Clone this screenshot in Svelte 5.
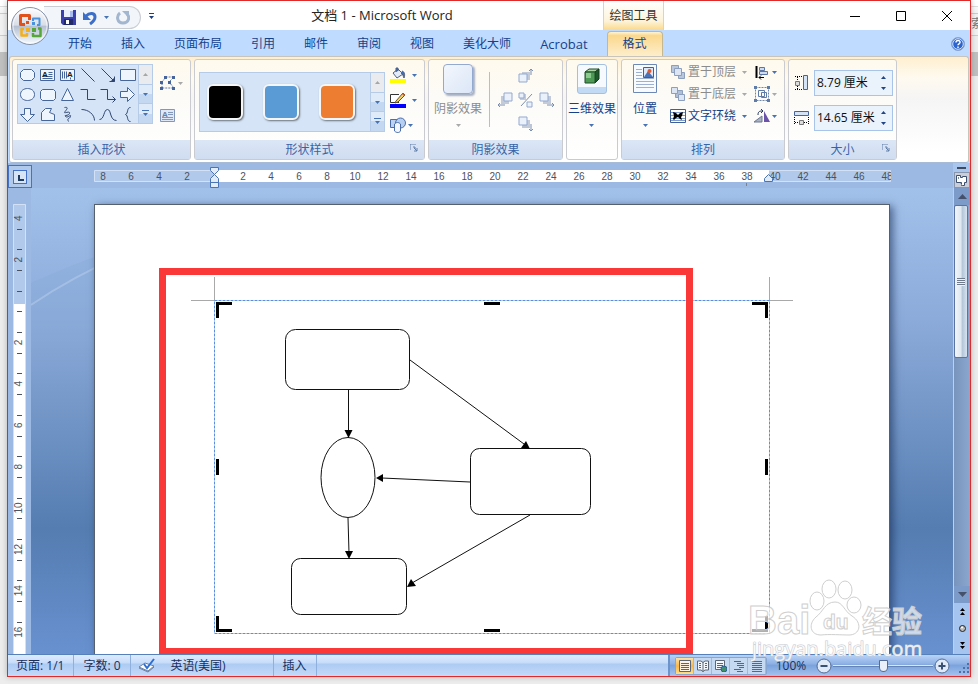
<script>
  const tabs = ['开始', '插入', '页面布局', '引用', '邮件', '审阅', '视图', '美化大师'];

  /** Shape gallery, three rows of six, drawn on a 20x20 grid */
  const shapes = [
    { name: '圆角矩形', d: 'M6 5h8l3 3v5l-3 3H6l-3-3V8z', filled: true },
    { name: '文本框', d: 'M3 5h14v11H3z M11 8h4 M11 10h4 M5 12h10 M5 14h10', letter: 5 },
    { name: '竖排文本框', d: 'M3 5h14v11H3z M5 7v7 M7 7v7 M9 7v7 M13 13v2', letter: 10 },
    { name: '直线', d: 'M4 4l13 13' },
    { name: '箭头', d: 'M4 4l13 13 M17 12v5h-5 M16 14v2h-2' },
    { name: '矩形', d: 'M3 5h15v11H3z', filled: true },
    { name: '椭圆', d: 'M3 10c0-8 14-8 14 0s-14 8-14 0z', filled: true },
    { name: '圆角', d: 'M5 5h11l2 2v7l-2 2H5l-2-2V7z', filled: true },
    { name: '三角形', d: 'M10 4l6 12H4z', filled: true },
    { name: '肘形连接符', d: 'M3 5h7v10h8' },
    { name: '肘形箭头', d: 'M3 5h7v10h8 M15 12l3 3l-3 3' },
    { name: '右箭头', d: 'M3 7h7V3l7 7l-7 7v-4H3z', filled: true },
    { name: '下箭头', d: 'M7 4h6v6h4l-7 7l-7-7h4z', filled: true },
    { name: '任意多边形', d: 'M4 8l4-4h6l-2 4l5 2v6H4z', filled: true },
    { name: '自由曲线', d: 'M7 3c6-1 0 4 0 5s6-2 5 1s-6 1-4 3s6-3 5 0s-4 1-2 5' },
    { name: '弧形', d: 'M4 5c7 0 13 5 13 11' },
    { name: '曲线', d: 'M2 15c5 0 4-10 8-10s2 11 9 11' },
    { name: '左大括号', d: 'M13 3c-4 0-2 6-5 7c3 1 1 7 5 7' }
  ];

  const styles = ['black', 'blue', 'orange'];
  const hNumbers = [8, 6, 4, 2];
  const hWhite = Array.from({ length: 24 }, (_, i) => (i + 1) * 2);
  const vNumbers = Array.from({ length: 8 }, (_, i) => (i + 1) * 2);

  let height = $state('8.79 厘米');
  let width = $state('14.65 厘米');
  let zoom = $state(50);
  let view = $state(0);
  const views = ['页面视图', '阅读版式', 'Web 版式', '大纲视图', '普通视图'];
</script>

{#snippet caret(tone)}
  <svg class="caret {tone}" width="5" height="3" viewBox="0 0 5 3"><path d="M0 0h5L2.500 3z" /></svg>
{/snippet}

{#snippet galleryScroll()}
  <div class="gallery-scroll">
    <button class="scroll-step off" aria-label="上一行"><svg width="5" height="3" viewBox="0 0 5 3"><path d="M0 3h5L2.500 0z" /></svg></button>
    <button class="scroll-step" aria-label="下一行">{@render caret('dark')}</button>
    <button class="scroll-step" aria-label="其他"><svg width="7" height="7" viewBox="0 0 7 7"><path d="M0 0h7v1H0zM1 3h5L3.500 6z" /></svg></button>
  </div>
{/snippet}

{#snippet launcher()}
  <button class="launcher" aria-label="对话框启动器">
    <svg width="8" height="8" viewBox="0 0 8 8"><path d="M0 6V0h6M3 3h2v2M7 4v3H4M4 4l3 3" /></svg>
  </button>
{/snippet}

{#snippet shadowIcon(dir)}
  <svg width="16" height="16" viewBox="0 0 16 16" class="nudge">
    {#if dir === 'toggle'}
      <path class="back" d="M2 2h6v6H2z" /><path class="front" d="M1 1h5v5H1zM9 10h5v5H9z" /><path class="arrow" d="M14 2L3 14" />
    {:else if dir === 'up'}
      <path class="back" d="M4 4h8v8H4z" /><path class="front" d="M1 6h8v8H1z" /><path class="arrow" d="M13 7V1M11 3l2-2l2 2" />
    {:else if dir === 'down'}
      <path class="back" d="M4 4h8v8H4z" /><path class="front" d="M1 1h8v8H1z" /><path class="arrow" d="M13 8v7M11 13l2 2l2-2" />
    {:else if dir === 'left'}
      <path class="back" d="M4 4h8v8H4z" /><path class="front" d="M7 1h8v8H7z" /><path class="arrow" d="M8 13H1M3 11l-2 2l2 2" />
    {:else}
      <path class="back" d="M4 4h8v8H4z" /><path class="front" d="M1 1h8v8H1z" /><path class="arrow" d="M8 13h7M13 11l2 2l-2 2" />
    {/if}
  </svg>
{/snippet}

<div class="desktop">
  <span class="behind">索</span>
  <div class="window">
    <!-- Title bar -->
    <header class="titlebar">
      <div class="quick-access">
        <button aria-label="保存">
          <svg width="15" height="15" viewBox="0 0 15 15"><path fill="#3a3fae" d="M0 0h15v15H2l-2-2z" /><path fill="#e8eefc" d="M3 0h9v7H3z" /><path fill="#a9bdf0" d="M9 1h3v6H9z" /><path fill="#222a6a" d="M3 9h9v6H3z" /><path fill="#fff" d="M5 10h3v4H5z" /></svg>
        </button>
        <button aria-label="撤消">
          <svg width="14" height="14" viewBox="0 0 14 14"><path d="M3 5c4-4 9-3 9 1c0 3-2 5-5 7" fill="none" stroke="#3d6fc8" stroke-width="3" /><path d="M0 1v8h8z" fill="#3d6fc8" /></svg>
        </button>
        <button class="narrow" aria-label="撤消列表">{@render caret('dark')}</button>
        <button aria-label="重复">
          <svg width="14" height="14" viewBox="0 0 14 14"><path d="M4 2c-4 3-3 10 3 10s7-6 4-9" fill="none" stroke="#a3b6cf" stroke-width="3" /><path d="M6 0h7v7z" fill="#a3b6cf" /></svg>
        </button>
      </div>
      <button class="customize" aria-label="自定义快速访问工具栏"><svg width="5" height="6" viewBox="0 0 5 6"><path d="M0 0h5v1H0zM0 3h5L2.500 6z" fill="#1f3f7f" /></svg></button>
      <h1>文档 1 - Microsoft Word</h1>
      <div class="context-title">绘图工具</div>
      <div class="controls">
        <button aria-label="最小化"><svg width="10" height="10" viewBox="0 0 10 10"><path d="M0 5.500h10" /></svg></button>
        <button aria-label="最大化"><svg width="10" height="10" viewBox="0 0 10 10"><path d="M.5.5h9v9h-9z" /></svg></button>
        <button aria-label="关闭"><svg width="10" height="10" viewBox="0 0 10 10"><path d="M0 0l10 10M10 0L0 10" /></svg></button>
      </div>
    </header>

    <!-- Tab strip -->
    <nav class="tabs">
      {#each tabs as tab}
        <button class="tab">{tab}</button>
      {/each}
      <button class="tab latin">Acrobat</button>
      <button class="tab active">格式</button>
      <button class="help" aria-label="帮助">
        <svg width="14" height="14" viewBox="0 0 14 14"><circle cx="7" cy="7" r="6.500" fill="#2b63cf" stroke="#8fa6cc" /><circle cx="7" cy="7" r="5.300" fill="none" stroke="#dbe8ff" /><path d="M5 5.500C5 2.600 9.400 3 9 5.500C8.800 7 7 6.800 7 8.300M7 9.500v1.500" fill="none" stroke="#fff" stroke-width="1.500" /></svg>
      </button>
    </nav>

    <button class="office" aria-label="Office 按钮">
      <svg width="40" height="40" viewBox="0 0 40 40">
        <defs>
          <linearGradient id="orb" x1="0" y1="0" x2="0" y2="1">
            <stop offset="0" stop-color="#fdfdfe" /><stop offset=".48" stop-color="#d9dde6" /><stop offset=".5" stop-color="#b4bfd2" /><stop offset="1" stop-color="#f6fbff" />
          </linearGradient>
        </defs>
        <circle cx="20" cy="20" r="18.500" fill="url(#orb)" stroke="#8592a8" />
        <circle cx="20" cy="20" r="17" fill="none" stroke="#fff" stroke-opacity=".7" />
        <g fill="none" stroke-linejoin="round">
          <path d="M15 18.500h-4.500v-9h9V14" stroke="#e2511b" stroke-width="3" />
          <path d="M23 15v-2.500h6.500V19H27" stroke="#4a93dc" stroke-width="2" />
          <path d="M17 27v2.500h-5.500V23H14" stroke="#f3b01c" stroke-width="2.500" />
          <path d="M28 22.500h2.500v7.500H23v-3" stroke="#56a63a" stroke-width="2.500" />
        </g>
        <path fill="#e2511b" d="M16 15h3v3h-3z" /><path fill="#4a93dc" d="M22 16h3v3h-3z" /><path fill="#f3b01c" d="M16 22h4v4h-4z" /><path fill="#56a63a" d="M22 22h4v4h-4z" />
      </svg>
    </button>

    <!-- Ribbon -->
    <section class="ribbon">
      <div class="group insert">
        <div class="body">
          <div class="gallery">
            <div class="shape-grid">
              {#each shapes as shape}
                <button class="shape" aria-label={shape.name}>
                  <svg width="20" height="20" viewBox="0 0 20 20">
                    <path d={shape.d} class:filled={shape.filled || shape.letter} transform="translate(-.5 -.5)" />
                    {#if shape.letter}<text x={shape.letter - 1} y="12">A</text>{/if}
                  </svg>
                </button>
              {/each}
            </div>
            {@render galleryScroll()}
          </div>
          <div class="insert-side">
            <button class="with-caret tight" aria-label="编辑形状">
              <svg width="16" height="14" viewBox="0 0 16 14"><path d="M2 12V6l4-5h8L9 6l5 6z" fill="none" stroke="#5b7bb0" stroke-dasharray="2 1" /><path fill="#46639c" d="M0 5h3v3H0zM4 0h3v3H4zM12 0h3v3h-3zM8 5h3v3H8zM0 11h3v3H0zM12 11h3v3h-3z" /></svg>
              {@render caret('muted')}
            </button>
            <button aria-label="文本框">
              <svg class="textbox-icon" width="15" height="13" viewBox="0 0 15 13"><path d="M.5.5h14v12H.5zM8 3.500h5M8 5.500h5M2 8.500h11M2 10.500h11" fill="#dfe8f6" stroke="#8397b8" /><text x="2" y="8">A</text></svg>
            </button>
          </div>
        </div>
        <h2>插入形状</h2>
      </div>

      <div class="group style">
        <div class="body">
          <div class="gallery">
            <div class="swatches">
              {#each styles as color}
                <button class="swatch-cell" aria-label="样式"><span class="swatch {color}"></span></button>
              {/each}
            </div>
            {@render galleryScroll()}
          </div>
          <div class="paint">
            <button class="with-caret" aria-label="形状填充">
              <svg width="16" height="16" viewBox="0 0 16 16"><path d="M3 6l5-4l5 5l-6 4z" fill="#e3ebf8" stroke="#4d5f83" /><path d="M6 5V1h2v3M12 4c3 1 3 4 2 7c-1-2-1-4-3-5" fill="#3d6fb8" stroke="#4d5f83" /><path fill="#ff0" d="M0 12h16v4H0z" /></svg>
              {@render caret('dark')}
            </button>
            <button class="with-caret" aria-label="形状轮廓">
              <svg width="16" height="16" viewBox="0 0 16 16"><path d="M9 2.500H.5v8H9" fill="#fff" stroke="#333" /><path d="M6 9l7-8l2 2l-7 7l-3 1z" fill="#f3d16a" stroke="#6b5320" /><path d="M12 2l1-1l2 2l-1 1z" fill="#d2573a" /><path fill="#00f" d="M0 12h16v4H0z" /></svg>
              {@render caret('dark')}
            </button>
            <button class="with-caret tight" aria-label="更改形状">
              <svg width="16" height="16" viewBox="0 0 16 16"><path d="M.5 2.500h9v8h-9z" fill="#bcd2f2" stroke="#4c6ea8" /><circle cx="10.500" cy="6" r="5" fill="#b7cff0" stroke="#4c6ea8" /><path d="M4.500 7v7c2 2 5 2 6 0V7c-2-2-4-2-6 0z" fill="#f2f7ff" stroke="#4c6ea8" /></svg>
              {@render caret('dark')}
            </button>
          </div>
        </div>
        <h2>形状样式{@render launcher()}</h2>
      </div>

      <div class="group shadow">
        <div class="body">
          <button class="big disabled">
            <span class="shadow-tile"></span>
            <span>阴影效果</span>
            {@render caret('muted')}
          </button>
          <div class="divider"></div>
          <div class="nudges">
            <button class="n-up" aria-label="上移">{@render shadowIcon('up')}</button>
            <button class="n-left" aria-label="左移">{@render shadowIcon('left')}</button>
            <button class="n-mid" aria-label="设置阴影">{@render shadowIcon('toggle')}</button>
            <button class="n-right" aria-label="右移">{@render shadowIcon('right')}</button>
            <button class="n-down" aria-label="下移">{@render shadowIcon('down')}</button>
          </div>
        </div>
        <h2>阴影效果</h2>
      </div>

      <div class="group three-d">
        <div class="body">
          <button class="big">
            <span class="cube-tile">
              <svg width="16" height="16" viewBox="0 0 16 16"><path d="M1 4l4-3h10l-4 3z" fill="#a8d3a2" stroke="#234d2a" /><path d="M11 4l4-3v10l-4 4z" fill="#1c5a2a" stroke="#173b1c" /><path d="M1 4h10v11H1z" fill="#4d9a55" stroke="#234d2a" /><path d="M2 5h5v5H2z" fill="#8cc98e" /></svg>
            </span>
            <span>三维效果</span>
            {@render caret('dark')}
          </button>
        </div>
      </div>

      <div class="group arrange">
        <div class="body">
          <button class="big">
            <svg width="24" height="30" viewBox="0 0 24 30"><path d="M.5.500h23v28H.5z" fill="#f7faff" stroke="#6d88b5" /><path d="M3 5.500h6M3 8.500h6M3 11.500h6M3 14.500h18M3 17.500h18M3 20.500h18M3 23.500h18" stroke="#9db0d2" /><path d="M10.500 3.500h10v10h-10z" fill="#dce9fb" stroke="#3f5f98" /><path d="M11 13l4-6l5 6z" fill="#4a74b8" /><circle cx="16.500" cy="7" r="2" fill="#dd5a33" /></svg>
            <span>位置</span>
            {@render caret('dark')}
          </button>
          <div class="arrange-list">
            <button class="row disabled">
              <svg width="16" height="16" viewBox="0 0 16 16"><g fill="#b9c7dc" stroke="#8c9fbc"><path d="M1.500 1.500h7v7h-7zM8.500 8.500h6v6h-6z" /><path d="M4.500 4.500h7v7h-7z" fill="#dbe5f3" /></g></svg>
              <span>置于顶层</span>{@render caret('muted')}
            </button>
            <button class="row disabled">
              <svg width="16" height="16" viewBox="0 0 16 16"><g fill="#dbe5f3" stroke="#8c9fbc"><path d="M5.500 4.500h7v7h-7z" fill="#b0bfd6" /><path d="M1.500 1.500h6v6h-6zM8.500 8.500h6v6h-6z" /></g></svg>
              <span>置于底层</span>{@render caret('muted')}
            </button>
            <button class="row">
              <svg width="16" height="16" viewBox="0 0 16 16"><path d="M.5 1.500h15v13H.5z" fill="#fff" stroke="#3e5f98" /><path d="M1 4.500h14M1 7.500h14M1 10.500h14M1 12.500h14" stroke="#7f9cca" /><path d="M3 4l3 1l2 2l2-2l3-1l-1 4l-1 1l1 3l-2-1l-2-2l-2 1l-2 2l-1-1l1-3z" fill="#000" /></svg>
              <span>文字环绕</span>{@render caret('dark')}
            </button>
          </div>
          <div class="align-list">
            <button class="with-caret tight" aria-label="对齐">
              <svg width="16" height="16" viewBox="0 0 16 16"><path d="M2.500 2v12" stroke="#000" stroke-width="2" /><path d="M5.500 3.500h5v3h-5zM5.500 7.500h8v3h-8z" fill="#cfdcf0" stroke="#5a76a6" /><path d="M5 13.500h5M7 11.500l-2 2l2 2" fill="none" stroke="#000" /></svg>
              {@render caret('dark')}
            </button>
            <button class="with-caret tight" aria-label="组合">
              <svg width="16" height="16" viewBox="0 0 16 16"><path d="M1.500 1.500h13v13h-13z" fill="none" stroke="#6d86b0" stroke-dasharray="2 1" /><path d="M4.500 4.500h6v6h-6zM7.500 6.500h5v5h-5z" fill="none" stroke="#5f7ba8" /><path d="M0 0h3v3H0zM13 0h3v3h-3zM0 13h3v3H0zM13 13h3v3h-3z" fill="#5f7ba8" /></svg>
              {@render caret('muted')}
            </button>
            <button class="with-caret tight" aria-label="旋转">
              <svg width="16" height="16" viewBox="0 0 16 16"><path d="M0 14h8V8z" fill="#a9b3c4" stroke="#6a7892" /><path d="M10 3v11h6z" fill="#6a53a8" /><path d="M4 7c0-4 2-4 5-4M7 1l2 2l-2 2" fill="none" stroke="#26395e" /></svg>
              {@render caret('dark')}
            </button>
          </div>
        </div>
        <h2>排列</h2>
      </div>

      <div class="group size">
        <div class="body">
          <div class="field">
            <label for="shape-height" aria-label="高度">
              <svg width="16" height="16" viewBox="0 0 16 16"><path d="M9.500.500h4v14h-4z" fill="#d5e3f7" stroke="#46639c" /><path d="M1 1.500h7M1 14.500h7M3.500 2v3M3.500 11v3" stroke="#000" stroke-dasharray="1 1" /><path d="M1.500 6.500h4v4h-4z" fill="#ddd" stroke="#777" /></svg>
            </label>
            <div class="spin">
              <input id="shape-height" type="text" bind:value={height} />
              <div class="steps">
                <button aria-label="增加高度"><svg width="5" height="3" viewBox="0 0 5 3"><path d="M0 3h5L2.500 0z" /></svg></button>
                <button aria-label="减少高度"><svg width="5" height="3" viewBox="0 0 5 3"><path d="M0 0h5L2.500 3z" /></svg></button>
              </div>
            </div>
          </div>
          <div class="field">
            <label for="shape-width" aria-label="宽度">
              <svg width="16" height="16" viewBox="0 0 16 16"><path d="M.5 1.500h14v4H.5z" fill="#d5e3f7" stroke="#46639c" /><path d="M.5 7v7M14.500 7v7M1 12.500h4M10 12.500h4" stroke="#000" stroke-dasharray="1 1" /><path d="M5.500 10.500h4v4h-4z" fill="#ddd" stroke="#777" /></svg>
            </label>
            <div class="spin">
              <input id="shape-width" type="text" bind:value={width} />
              <div class="steps">
                <button aria-label="增加宽度"><svg width="5" height="3" viewBox="0 0 5 3"><path d="M0 3h5L2.500 0z" /></svg></button>
                <button aria-label="减少宽度"><svg width="5" height="3" viewBox="0 0 5 3"><path d="M0 0h5L2.500 3z" /></svg></button>
              </div>
            </div>
          </div>
        </div>
        <h2>大小{@render launcher()}</h2>
      </div>
    </section>

    <!-- Rulers, page and scroll bar -->
    <main class="workspace">
      <button class="tab-stop" aria-label="制表符"><span></span></button>

      <div class="h-ruler">
        <svg width="798" height="25" viewBox="93 163 798 25">
          <path d="M94.500 170.500h796v11h-796z" fill="#b1c9eb" stroke="#d3e1f6" />
          <path d="M215 170h554v12H215z" fill="#fff" />
          {#each hNumbers as n}
            <text x={215 - n * 14} y="180">{n}</text>
          {/each}
          {#each hWhite as n}
            <text x={215 + n * 14} y="180">{n}</text>
          {/each}
          <path d="M746.500 183v3" stroke="#7a818f" />
          <path d="M210.500 167.500h8v3l-4 4l-4-4zM210.500 182.500v-4l4-4l4 4v4zM210.500 182.500h8v5h-8z" fill="#e2ebf8" stroke="#4a74b5" />
          <path d="M764.500 181.500v-3l4-4l4 4v3z" fill="#e2ebf8" stroke="#4a74b5" />
        </svg>
      </div>

      <div class="ruler-toggle">
        <span class="split"></span>
        <button aria-label="标尺"><svg width="13" height="13" viewBox="0 0 13 13"><path d="M1.500 1.500h4v2h2v-1h4v6h-2v3h-3v-3h-5z" fill="#fff" stroke="#3d4f6e" /><path d="M3.500 3v2M5.500 9.500l2 2" stroke="#7a8ba8" /></svg></button>
      </div>

      <div class="v-ruler">
        <svg width="23" height="466" viewBox="8 188 23 466">
          <path d="M13.500 204.500h12v460h-12z" fill="#b1c9eb" stroke="#d3e1f6" />
          <path d="M14 304h11v360H14z" fill="#fff" />
          {#each [4, 2] as n}
            <text transform="translate(22 {301 - n * 20.7}) rotate(-90)">{n}</text>
            <path d="M17 {Math.round(301 - (n - 0.5) * 20.7)}.500h5M17 {Math.round(301 - (n - 1.5) * 20.7)}.500h5" stroke="#4c5260" />
          {/each}
          {#each vNumbers as n}
            <text transform="translate(22 {301 + n * 20.7}) rotate(-90)">{n}</text>
            <path d="M17 {Math.round(301 + (n - 1.5) * 20.7)}.500h5M17 {Math.round(301 + (n - 0.5) * 20.7)}.500h5" stroke="#4c5260" />
          {/each}
        </svg>
      </div>

      <div class="canvas">
        <svg class="wave" width="300" height="160" viewBox="0 0 300 160">
          <path d="M0 95Q90 55 160 40H300V160H0z" fill="#86a8d8" fill-opacity=".35" />
          <path d="M0 117Q60 76 140 48" fill="none" stroke="#b9d0ee" stroke-opacity=".5" stroke-width="2" />
        </svg>
        <div class="page">
          <svg width="794" height="450" viewBox="95 205 794 450">
            <g class="margin-marks">
              <path d="M191 300.500h24M214.500 277v24M769.500 277v24M770 300.500h23" />
            </g>
            <path d="M214.500 300.500h555v333h-555z" fill="none" stroke="#5b8fdc" stroke-dasharray="3 1" />
            <g class="handles">
              <path d="M216 302h16v3h-13v13h-3zM484 302h16v3h-16zM752 302h16v16h-3v-13h-13z" />
              <path d="M216 459h3v16h-3zM765 459h3v16h-3z" />
              <path d="M216 616h3v13h13v3h-16zM484 629h16v3h-16zM765 616h3v16h-16v-3h13z" />
            </g>
            <g class="flow">
              <rect x="285.500" y="329.500" width="124" height="60" rx="10" />
              <ellipse cx="348" cy="477.500" rx="27" ry="40" />
              <rect x="470.500" y="448.500" width="120" height="66" rx="9" />
              <rect x="291.500" y="558.500" width="115" height="56" rx="9" />
              <path d="M348.500 390v42M410 360l114 84M470 482l-88-4M348 518l1 35M530 515l-118 68" />
            </g>
            <path d="M344.500 430h8l-4 8zM526 441l-5 7l9 1zM383 474v8l-7-4zM345 551h8l-4 8zM411 579l5 7l-9 1z" />
            <path class="highlight" d="M162.500 271.500h527v380h-527z" />
          </svg>
        </div>
      </div>

      <div class="scrollbar">
        <button class="arrow" aria-label="向上滚动"><svg width="9" height="5" viewBox="0 0 9 5"><path d="M0 5h9L4.500 0z" /></svg></button>
        <div class="track"><div class="thumb"><span></span></div></div>
        <button class="arrow" aria-label="向下滚动"><svg width="9" height="5" viewBox="0 0 9 5"><path d="M0 0h9L4.500 5z" /></svg></button>
        <button class="browse" aria-label="前一页"><svg width="5" height="7" viewBox="0 0 5 7"><path d="M0 3h5L2.500 0zM0 7h5L2.500 4z" /></svg></button>
        <button class="browse" aria-label="选择浏览对象"><svg width="7" height="7" viewBox="0 0 7 7"><circle cx="3.500" cy="3.500" r="3" fill="#bbb" stroke="#222" /><circle cx="3" cy="2.500" r="1" fill="#fff" /></svg></button>
        <button class="browse" aria-label="下一页"><svg width="5" height="7" viewBox="0 0 5 7"><path d="M0 0h5L2.500 3zM0 4h5L2.500 7z" /></svg></button>
      </div>
    </main>

    <!-- Status bar -->
    <footer class="status">
      <button class="cell pages">页面: 1/1</button>
      <button class="cell words">字数: 0</button>
      <button class="cell language">
        <svg width="16" height="15" viewBox="0 0 16 15"><path d="M0 9l6-4l9 3l-6 5z" fill="#fff" stroke="#6d7f9f" /><path d="M0 10l9 4l6-5" fill="none" stroke="#6b7fa4" /><path d="M5 6l3 4l7-9" fill="none" stroke="#2f6fd0" stroke-width="2" /></svg>
        英语(美国)
      </button>
      <button class="cell">插入</button>
      <div class="status-right">
        <div class="views">
          {#each views as name, i}
            <button class:on={view === i} aria-label={name} onclick={() => (view = i)}>
              <svg width="12" height="12" viewBox="0 0 12 12">
                {#if i === 0}
                  <path d="M.5.500h11v11H.5zM2 3.500h8M2 5.500h8M2 7.500h8M2 9.500h8" fill="#fff" />
                {:else if i === 1}
                  <path d="M6 2.500L4 1H.5v9H4l2 1.500L8 10h3.500V1H8zM6 2v10M2 3.500h2M2 5.500h2M2 7.500h2M8 3.500h2M8 5.500h2M8 7.500h2" fill="#fff" />
                {:else if i === 2}
                  <path d="M.5.500h9v9h-9zM2 3.500h6M2 5.500h6M2 7.500h4" fill="#fff" /><circle cx="9" cy="9" r="3" fill="#3f8f6a" stroke="#2a5f95" />
                {:else if i === 3}
                  <path d="M1 1.500h7M4 3.500h7M4 5.500h7M6 7.500h5M1 9.500h7M4 11.500h6" />
                {:else}
                  <path d="M1 1.500h10M1 3.500h10M1 5.500h10M1 7.500h10M1 9.500h10M1 11.500h10" />
                {/if}
              </svg>
            </button>
          {/each}
        </div>
        <button class="percent">{zoom * 2}%</button>
        <button class="round" aria-label="缩小" onclick={() => (zoom = Math.max(5, zoom - 5))}><svg width="16" height="16" viewBox="0 0 16 16"><circle cx="8" cy="8" r="7" /><path d="M4.500 8h7" /></svg></button>
        <input class="zoom" type="range" min="0" max="100" bind:value={zoom} aria-label="显示比例" />
        <button class="round" aria-label="放大" onclick={() => (zoom = Math.min(100, zoom + 5))}><svg width="16" height="16" viewBox="0 0 16 16"><circle cx="8" cy="8" r="7" /><path d="M4.500 8h7M8 4.500v7" /></svg></button>
        <svg class="grip" width="11" height="11" viewBox="0 0 11 11"><path d="M8 0h2v2H8zM4 4h2v2H4zM8 4h2v2H8zM0 8h2v2H0zM4 8h2v2H4zM8 8h2v2H8z" /></svg>
      </div>
    </footer>

    <!-- Site watermark -->
    <svg class="watermark" width="180" height="90" viewBox="748 575 180 90">
      <g class="mark">
        <ellipse cx="817" cy="601" rx="7" ry="9" /><ellipse cx="829" cy="589" rx="7" ry="9" /><ellipse cx="845" cy="590" rx="7" ry="9" /><ellipse cx="854" cy="605" rx="7" ry="8" />
        <path d="M835 602c8 0 9 9 17 14c11 7 8 19-3 19c-7 0-20-1-28 0c-11 0-13-11-5-18c7-5 9-15 19-15z" />
        <text class="bai" x="748" y="634">Bai</text>
        <text class="du" x="823" y="629">du</text>
        <text class="cn" x="862" y="632">经验</text>
      </g>
      <text class="site" x="752" y="656">jingyan.baidu.com</text>
    </svg>
  </div>
</div>

<style>
  :global(body) {
    margin: 0;
  }

  .desktop {
    position: relative;
    box-sizing: border-box;
    height: 100vh;
    min-height: 480px;
    padding: 0 7px 7px;
    overflow: hidden;
    background: linear-gradient(#fff 6px, #ddd 6px, #ddd 7px, #fafafa 7px, #f4f4f4 13px, #ccc 13px, #ccc 14px, #f2f2f2 14px, #f2f2f2 35px, #ccc 35px, #ccc 36px, #eee 36px, #eee 52px, #c0c0c0 52px, #c0c0c0 76px, #ededed 76px);
    font-family: "Open Sans", "Noto Sans CJK SC", sans-serif;
    font-size: 12px;
    line-height: 16px;
    color: #15428b;
  }

  .behind {
    position: absolute;
    top: 16px;
    right: -5px;
    color: #777;
  }

  .window {
    position: relative;
    box-sizing: border-box;
    height: 100%;
    display: flex;
    flex-direction: column;
    border: 1px solid #e02a2a;
    background: #bfdbff;
    box-shadow: 0 0 6px rgba(0, 0, 0, 0.25);
  }

  button {
    display: flex;
    align-items: center;
    justify-content: center;
    margin: 0;
    padding: 0;
    border: 0;
    background: none;
    color: inherit;
    font: inherit;
    white-space: nowrap;
  }

  svg {
    display: block;
    flex: none;
  }

  .caret {
    fill: #4573b5;
  }

  .caret.muted {
    fill: #a9a9a9;
  }

  /* Title bar */
  .titlebar {
    display: flex;
    height: 29px;
    flex: none;
    background: #fff;
  }

  .quick-access {
    display: flex;
    align-items: center;
    box-sizing: border-box;
    width: 97px;
    height: 23px;
    margin: 5px 0 0 36px;
    padding-left: 17px;
    gap: 7px;
    border: 1px solid #c9cdd3;
    border-left: 0;
    border-radius: 0 12px 12px 0;
    background: #f2f5f9;
  }

  .customize {
    width: 20px;
  }

  .titlebar h1 {
    flex: 1;
    margin: 0;
    font-size: 13px;
    line-height: 29px;
    font-weight: 400;
    text-align: center;
    color: #222;
  }

  .context-title {
    width: 59px;
    line-height: 29px;
    text-align: center;
    color: #333;
    border: solid #d9d4c8;
    border-width: 0 1px;
    background: linear-gradient(#fff, #fdf3d9 70%, #fbd98a);
  }

  .controls {
    display: flex;
    margin-left: 168px;
  }

  .controls button {
    width: 46px;
  }

  .controls path {
    fill: none;
    stroke: #000;
  }

  /* Tab strip */
  .tabs {
    display: flex;
    box-sizing: border-box;
    height: 26px;
    flex: none;
    gap: 29px;
    padding: 1px 5px 0 60px;
  }

  .latin {
    font-size: 13px;
  }

  .tab.active {
    box-sizing: border-box;
    width: 56px;
    margin-left: -10px;
    border: 1px solid #c5b78f;
    border-bottom: 0;
    border-radius: 4px 4px 0 0;
    background: linear-gradient(#fff3d6, #fbd88d 15%, #fdeecb);
  }

  .help {
    margin-left: auto;
  }

  .office {
    position: absolute;
    top: 5px;
    left: 2px;
  }

  /* Ribbon */
  .ribbon {
    display: flex;
    flex: none;
    gap: 3px;
    margin: 0 1px;
    padding: 2px;
    border: 1px solid #c8c3bb;
    border-bottom: 1px solid #a8bbd6;
    border-radius: 3px;
    background: linear-gradient(#feefcf, #fffaf0 20%, #f5f5f5 40%, #fff 90%);
  }

  .group {
    display: flex;
    flex-direction: column;
    box-sizing: border-box;
    height: 101px;
    border: 1px solid #c9cbd0;
    border-radius: 3px;
    background: linear-gradient(#fffaee, #fcfbf8 40%, #fff);
  }

  .group h2 {
    position: relative;
    flex: none;
    height: 19px;
    margin: 0;
    font-size: 12px;
    line-height: 19px;
    font-weight: 400;
    text-align: center;
    color: #3764a8;
    background: linear-gradient(#dbe6f6, #d0ddf1);
  }

  .launcher {
    position: absolute;
    right: 6px;
    top: 4px;
  }

  .launcher path {
    fill: none;
    stroke: #5f7ea8;
  }

  .body {
    display: flex;
    flex: 1;
  }

  .insert {
    width: 179px;
  }

  .style {
    width: 231px;
  }

  .shadow {
    width: 135px;
  }

  .three-d {
    width: 52px;
  }

  .arrange {
    width: 164px;
  }

  .size {
    width: 109px;
  }

  .gallery {
    display: flex;
    height: 58px;
    border: 1px solid #b5cbe8;
    background: #d5e5f7;
  }

  .insert .gallery {
    margin: 4px 0 0 4px;
  }

  .shape-grid {
    display: grid;
    grid-template-columns: repeat(6, 20px);
    grid-auto-rows: 20px;
    height: 58px;
  }

  .shape path {
    fill: none;
    stroke: #2f4670;
  }

  .shape path.filled {
    fill: #eef5fd;
    stroke: #46659a;
  }

  .shape text,
  .textbox-icon text {
    font: 700 8px "Liberation Sans", sans-serif;
    fill: #222;
  }

  .textbox-icon text {
    fill: #6b80a6;
  }

  .gallery-scroll {
    display: flex;
    flex-direction: column;
    width: 13px;
    border-left: 1px solid #b5cbe8;
  }

  .scroll-step {
    flex: 1;
    border-bottom: 1px solid #b5cbe8;
    background: linear-gradient(#e0ebfa 50%, #c5d8f2 50%);
    fill: #4573b5;
  }

  .scroll-step.off {
    background: #e9ebee;
    fill: #a6a6a6;
  }

  .scroll-step:last-child {
    border-bottom: 0;
  }

  .insert-side {
    display: flex;
    flex-direction: column;
    align-items: flex-start;
    gap: 19px;
    padding: 16px 0 0 7px;
  }

  .with-caret {
    gap: 6px;
  }

  .with-caret.tight {
    gap: 2px;
  }

  .style .gallery {
    margin: 12px 0 0 4px;
  }

  .swatches {
    display: grid;
    grid-template-columns: repeat(3, 56px);
    width: 170px;
  }

  .swatch {
    box-sizing: border-box;
    width: 36px;
    height: 36px;
    border: 2px solid #f4f6f8;
    border-radius: 6px;
    box-shadow: 1px 1px 2px rgba(0, 0, 0, 0.5);
  }

  .swatch-cell {
    justify-content: flex-start;
    padding-left: 7px;
  }

  .black {
    background: #000;
  }

  .blue {
    background: #5b9bd5;
  }

  .orange {
    background: #ed7d31;
  }

  .paint {
    display: flex;
    flex-direction: column;
    align-items: flex-start;
    gap: 9px;
    padding: 7px 0 0 5px;
  }

  .big {
    flex-direction: column;
    justify-content: flex-start;
    align-self: flex-start;
    height: 79px;
    padding-top: 4px;
    gap: 7px;
  }

  .disabled {
    color: #8c8c8c;
  }

  .shadow .big {
    width: 58px;
  }

  .shadow-tile {
    box-sizing: border-box;
    width: 30px;
    height: 30px;
    border: 1px solid #93a9cf;
    border-radius: 4px;
    background: linear-gradient(135deg, #f3f7fd, #dbe6f7);
    box-shadow: 2px 2px 2px #a6b0c4;
  }

  .divider {
    width: 1px;
    height: 55px;
    margin: 12px 4px 0 2px;
    background: #a9c0e2;
  }

  .nudges {
    display: grid;
    grid-template:
      ". up ." 24px
      "left mid right" 24px
      ". down ." 24px / 21px 21px 21px;
    padding-top: 4px;
  }

  .n-up { grid-area: up; }
  .n-left { grid-area: left; }
  .n-mid { grid-area: mid; }
  .n-right { grid-area: right; }
  .n-down { grid-area: down; }

  .nudge .back {
    fill: #c3cbd9;
  }

  .nudge .front {
    fill: #eaf1fb;
    stroke: #93a9cf;
  }

  .nudge .arrow {
    fill: none;
    stroke: #7b8fb3;
  }

  .three-d .body {
    justify-content: center;
  }

  .cube-tile {
    display: flex;
    align-items: center;
    justify-content: center;
    box-sizing: border-box;
    width: 30px;
    height: 30px;
    padding-bottom: 6px;
    border: 1px solid #a5bfe0;
    border-radius: 3px;
    background: linear-gradient(#f6fafe 22px, #c3daf4 22px);
  }

  .arrange .big {
    width: 46px;
  }

  .arrange-list,
  .align-list {
    display: flex;
    flex-direction: column;
    align-items: flex-start;
    padding-top: 1px;
  }

  .arrange-list {
    width: 84px;
    padding-left: 2px;
  }

  .row,
  .align-list button {
    height: 22px;
  }

  .row {
    gap: 2px;
  }

  .row .caret {
    margin-left: 4px;
  }

  .size .body {
    flex-direction: column;
    gap: 9px;
    padding: 10px 0 0 5px;
  }

  .field {
    display: flex;
    align-items: center;
    gap: 4px;
  }

  .spin {
    display: flex;
    box-sizing: border-box;
    width: 79px;
    height: 26px;
    border: 1px solid #a9c4e9;
    background: #eaf2fc;
  }

  .spin input {
    box-sizing: border-box;
    width: 60px;
    padding: 0 0 0 2px;
    border: 0;
    background: none;
    color: #111;
    font: inherit;
  }

  .steps {
    display: flex;
    flex: 1;
    flex-direction: column;
    justify-content: center;
    gap: 8px;
    fill: #1f4587;
  }

  /* Workspace */
  .workspace {
    flex: 1;
    display: grid;
    grid-template: 25px minmax(0, 1fr) / 23px minmax(0, 1fr) 17px;
    min-height: 0;
    background: #9bb9e3;
  }

  .tab-stop {
    box-sizing: border-box;
    width: 24px;
    height: 23px;
    margin-top: 2px;
    border: 1px solid #4472c8;
    background: #b1c9eb;
  }

  .tab-stop span {
    position: relative;
    box-sizing: border-box;
    width: 14px;
    height: 14px;
    border: 1px solid #4472c8;
    background: #d7e4f6;
  }

  .tab-stop span::after {
    content: "";
    position: absolute;
    left: 4px;
    top: 4px;
    width: 4px;
    height: 4px;
    border: solid #1e3c60;
    border-width: 0 0 2px 2px;
  }

  .h-ruler,
  .v-ruler {
    overflow: hidden;
  }

  .h-ruler {
    display: flex;
    justify-content: center;
  }

  .h-ruler text,
  .v-ruler text {
    font: 10px "Liberation Sans", sans-serif;
    fill: #4c5260;
    text-anchor: middle;
  }

  .ruler-toggle {
    display: flex;
    flex-direction: column;
    align-items: center;
    background: #a9c6ee;
  }

  .split {
    width: 9px;
    height: 2px;
    margin: 4px 0 3px;
    background: #3d4a60;
  }

  .ruler-toggle button {
    width: 16px;
    height: 16px;
    border: 1px solid #8795ad;
    background: #c9ced8;
    box-sizing: border-box;
  }

  .canvas {
    position: relative;
    display: flex;
    justify-content: center;
    overflow: hidden;
    background: linear-gradient(#a2c1ea, #8cabda 28%, #557db1 73%, #6891d0);
  }

  .wave {
    position: absolute;
    left: 0;
    top: 0;
  }

  .page {
    position: relative;
    box-sizing: border-box;
    flex: none;
    width: 796px;
    margin-top: 16px;
    border: 1px solid #56606e;
    border-bottom: 0;
    background: #fff;
    box-shadow: 3px 2px 8px rgba(20, 40, 80, 0.6);
    overflow: hidden;
  }

  .margin-marks path {
    stroke: #a9a9a9;
  }

  .flow > * {
    fill: none;
    stroke: #111;
  }

  .highlight {
    fill: none;
    stroke: #fb3838;
    stroke-width: 7px;
  }

  .scrollbar {
    display: flex;
    flex-direction: column;
    min-height: 0;
    border-left: 1px solid #b9d1f2;
    background: #a6c4f0;
  }

  .scrollbar .arrow {
    height: 17px;
    flex: none;
    background: #7d9bc8;
    fill: #45516b;
  }

  .track {
    flex: 1;
    background: linear-gradient(90deg, #7893bc, #8ba7d0);
  }

  .thumb {
    display: flex;
    align-items: center;
    justify-content: center;
    box-sizing: border-box;
    width: 14px;
    height: 153px;
    border: 1px solid #5a73a5;
    border-radius: 2px;
    background: linear-gradient(90deg, #f1f5fa, #dfe7f1 50%, #b3c5d8 60%, #d7e3f0);
  }

  .thumb span {
    width: 8px;
    height: 8px;
    background: repeating-linear-gradient(#6f7b8c 0 1px, #eef2f6 1px 2px);
  }

  .browse {
    height: 17px;
    flex: none;
  }

  /* Status bar */
  .status {
    display: flex;
    flex: none;
    box-sizing: border-box;
    height: 22px;
    border-top: 1px solid #5580b9;
    background: linear-gradient(#dcebff, #c9defa 35%, #aecbf2 45%, #c3dafa);
  }

  .cell {
    padding: 0 9px;
    border-right: 1px solid #8fb0dd;
    color: #1a2f5c;
  }

  .pages {
    padding-left: 8px;
  }

  .language {
    justify-content: flex-start;
    width: 143px;
    box-sizing: border-box;
    padding: 0 0 0 8px;
    gap: 16px;
  }

  .status-right {
    display: flex;
    align-items: center;
    margin-left: auto;
    padding-left: 5px;
    border-left: 2px solid #6d94ca;
    background: linear-gradient(#b8d3f7, #8fb3e6 40%, #7ba3dd 50%, #a5c3ee);
  }

  .views {
    display: flex;
    box-sizing: border-box;
    height: 18px;
    border: 1px solid #86a5d0;
    border-radius: 2px;
    background: #c5d9f3;
  }

  .views button {
    width: 18px;
    border-right: 1px solid #9fb9dc;
    box-sizing: border-box;
  }

  .views button.on {
    background: linear-gradient(#fde3a8, #f9b64b 50%, #fde08a);
  }

  .views path {
    stroke: #5d6675;
    stroke-width: 1px;
    fill-opacity: 0.8;
  }

  .views path:not([fill]) {
    fill: none;
  }

  .percent {
    width: 48px;
    color: #1a2f5c;
  }

  .round {
    width: 18px;
  }

  .round circle {
    fill: #dfe9f7;
    stroke: #526c96;
  }

  .round path {
    stroke: #3a4f74;
    stroke-width: 2;
  }

  .zoom {
    appearance: none;
    width: 100px;
    height: 14px;
    margin: 0;
    background: linear-gradient(transparent 6px, #d7e6fb 6px, #d7e6fb 7px, #6384b5 7px, #6384b5 8px, transparent 8px);
  }

  .zoom::-webkit-slider-thumb {
    appearance: none;
    width: 9px;
    height: 12px;
    border: 1px solid #526c96;
    border-radius: 1px 1px 5px 5px;
    background: #e9f0fa;
  }

  .grip {
    align-self: flex-end;
    margin: 0 0 2px 8px;
    fill: #4e70a8;
  }

  .watermark {
    position: absolute;
    right: 42px;
    bottom: 11px;
    pointer-events: none;
  }

  .mark > * {
    fill: #fff;
    fill-opacity: 0.7;
    stroke: #cfcfcf;
    stroke-width: 1px;
  }

  .bai {
    font: 700 40px "Liberation Sans", sans-serif;
  }

  .du {
    font: 700 21px "Liberation Sans", sans-serif;
  }

  .cn {
    font: 700 30px "Noto Sans CJK SC", sans-serif;
  }

  .site {
    font: 20px "Open Sans", sans-serif;
    fill: #fff;
    fill-opacity: 0.8;
    stroke: #c4c9d0;
    stroke-width: 1px;
    paint-order: stroke;
  }
</style>
